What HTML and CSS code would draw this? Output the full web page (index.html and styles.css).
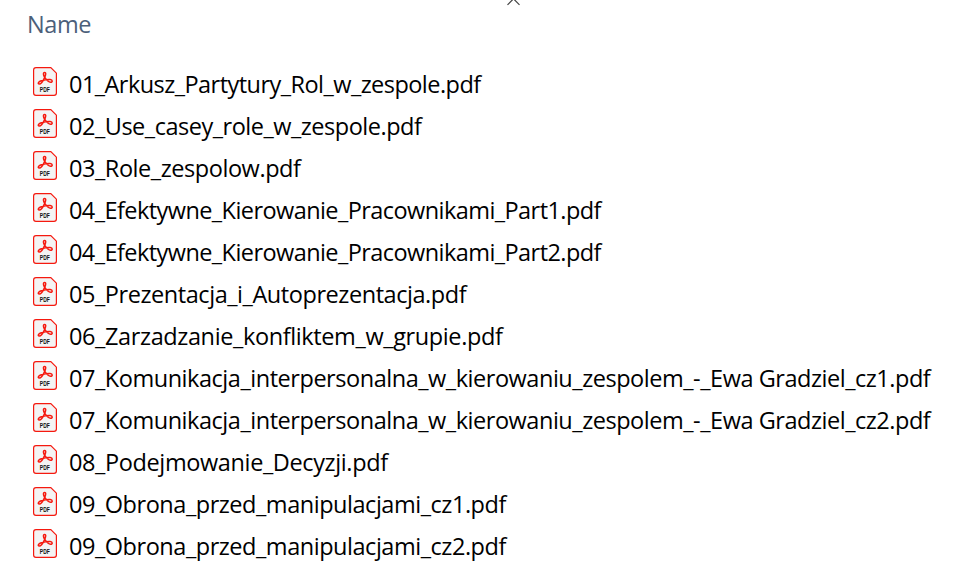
FILE: index.html
```html
<!DOCTYPE html>
<html lang="pl">
<head>
<meta charset="utf-8">
<title>Files</title>
<link rel="stylesheet" href="styles.css">
</head>
<body>
<header class="header"><span class="title">Name</span>
  <svg class="sort" width="15" height="6" viewBox="0 0 15 6"><path d="M1.5 4.8L7.5 -1.2L13.5 4.8" fill="none" stroke="#444" stroke-width="1.2"/></svg>
</header>
<ul class="files">
  <li class="file"><svg class="icon" viewBox="0 0 24 29">
    <g id="pdf">
      <path d="M3 .6H17.8L23.4 6.2V26Q23.4 28.4 21 28.4H3Q.6 28.4 .6 26V3Q.6 .6 3 .6Z" fill="#f4f4f4" stroke="#f5190f" stroke-width="1.2"/>
      <path d="M11.6 5.5C9.9 5.5 10.3 8.3 11.6 10.2C13 12.4 15.3 15.3 17.6 15.3C19.8 15.3 19.8 12.7 17.2 12.5C14 12.3 11 13 8.2 13.8C5 14.8 4.6 17.1 6.2 17.1C8.2 17.1 10.4 13.3 11.6 10.6C12.8 8 13.3 5.5 11.6 5.5Z" fill="none" stroke="#f5190f" stroke-width="1.5"/>
      <text x="6.8" y="25" class="pdf-label" textLength="10" lengthAdjust="spacingAndGlyphs">PDF</text>
    </g></svg><span class="name s54">01_Arkusz_Partytury_Rol_w_zespole.pdf</span></li>
  <li class="file"><svg class="icon"><use href="#pdf"/></svg><span class="name s48">02_Use_casey_role_w_zespole.pdf</span></li>
  <li class="file"><svg class="icon"><use href="#pdf"/></svg><span class="name s44">03_Role_zespolow.pdf</span></li>
  <li class="file"><svg class="icon"><use href="#pdf"/></svg><span class="name s56">04_Efektywne_Kierowanie_Pracownikami_Part1.pdf</span></li>
  <li class="file"><svg class="icon"><use href="#pdf"/></svg><span class="name s56">04_Efektywne_Kierowanie_Pracownikami_Part2.pdf</span></li>
  <li class="file"><svg class="icon"><use href="#pdf"/></svg><span class="name s44">05_Prezentacja_i_Autoprezentacja.pdf</span></li>
  <li class="file"><svg class="icon"><use href="#pdf"/></svg><span class="name s38">06_Zarzadzanie_konfliktem_w_grupie.pdf</span></li>
  <li class="file"><svg class="icon"><use href="#pdf"/></svg><span class="name s46">07_Komunikacja_interpersonalna_w_kierowaniu_zespolem_-_Ewa Gradziel_cz1.pdf</span></li>
  <li class="file"><svg class="icon"><use href="#pdf"/></svg><span class="name s46">07_Komunikacja_interpersonalna_w_kierowaniu_zespolem_-_Ewa Gradziel_cz2.pdf</span></li>
  <li class="file"><svg class="icon"><use href="#pdf"/></svg><span class="name s38">08_Podejmowanie_Decyzji.pdf</span></li>
  <li class="file"><svg class="icon"><use href="#pdf"/></svg><span class="name s46">09_Obrona_przed_manipulacjami_cz1.pdf</span></li>
  <li class="file"><svg class="icon"><use href="#pdf"/></svg><span class="name s46">09_Obrona_przed_manipulacjami_cz2.pdf</span></li>
</ul>
</body>
</html>
```
FILE: styles.css
```css
body { margin: 0; background: #fff; color: #000; font: 23.5px/42px "Segoe UI", "Open Sans", sans-serif; overflow: hidden; }
.header { display: flex; height: 63px; padding-left: 27px; color: #4c607a; box-sizing: border-box; }
.title { padding-top: 3px; width: 479px; letter-spacing: -.4px; }
.sort { display: block; }
.files { list-style: none; margin: 0; padding: 0 0 0 33px; }
.file { display: flex; height: 42px; gap: 12px; white-space: nowrap; }
.icon { width: 24px; height: 29px; margin-top: 4px; flex: none; }
.s38 { letter-spacing: -.38px; }
.s44 { letter-spacing: -.44px; }
.s46 { letter-spacing: -.46px; }
.s48 { letter-spacing: -.48px; }
.s54 { letter-spacing: -.54px; }
.s56 { letter-spacing: -.565px; }
.pdf-label { font: bold 6.8px "Liberation Sans", sans-serif; letter-spacing: 0; fill: #111; }
```
